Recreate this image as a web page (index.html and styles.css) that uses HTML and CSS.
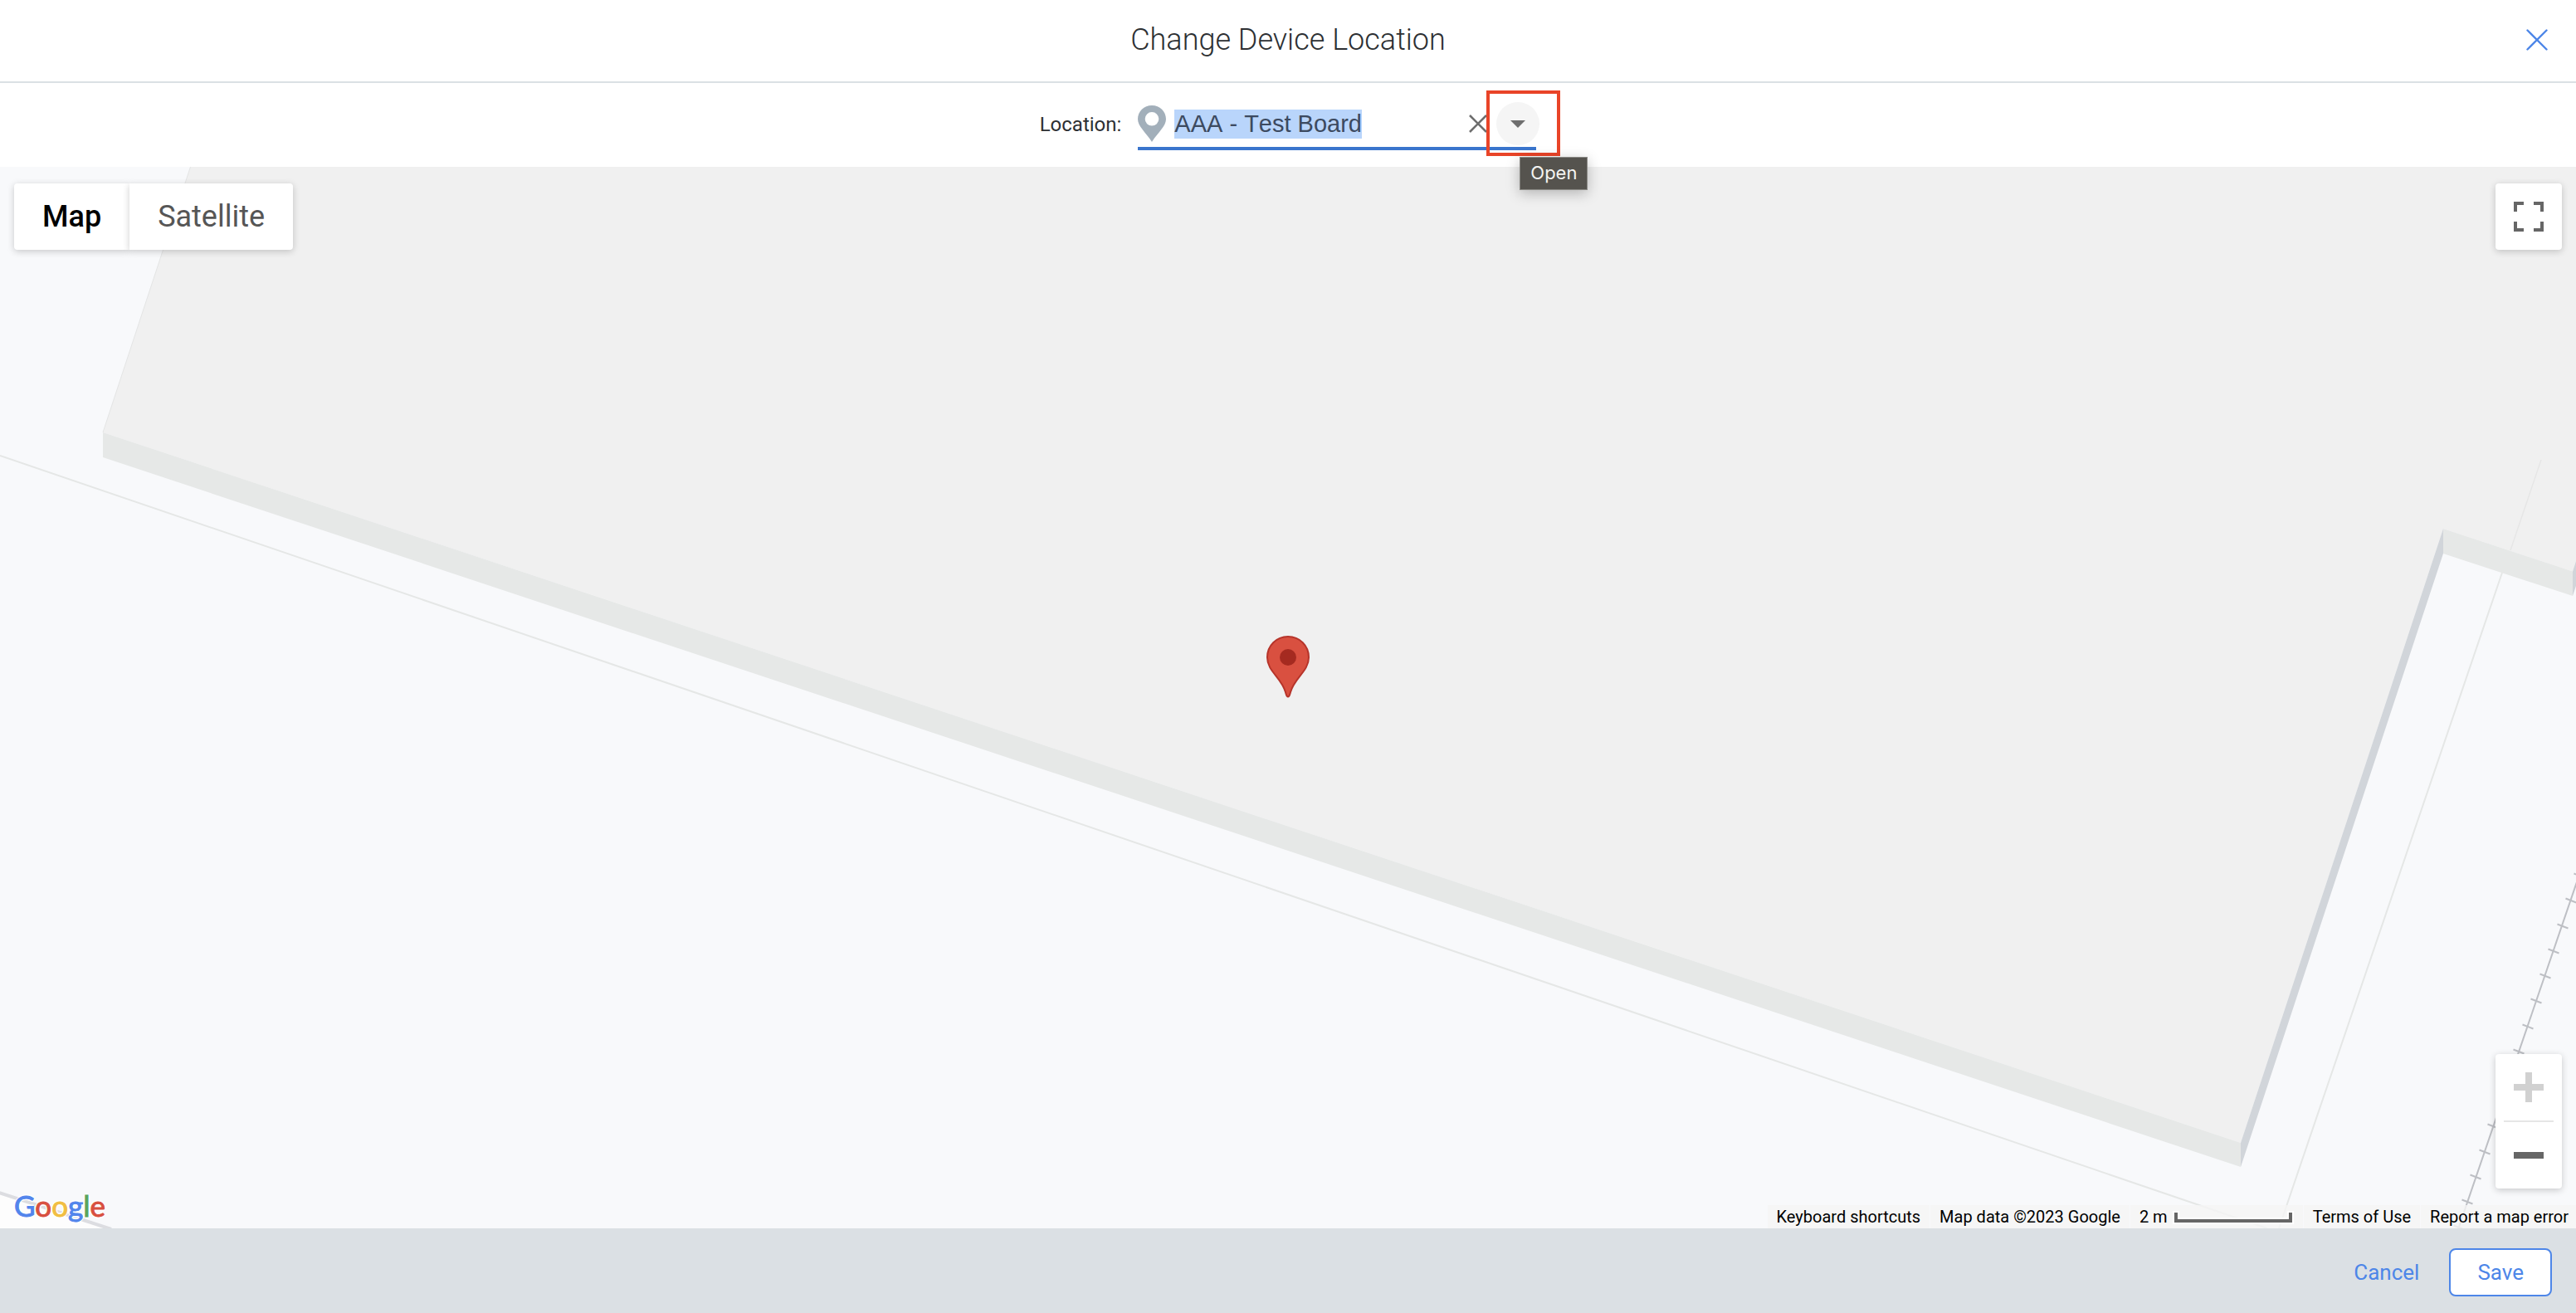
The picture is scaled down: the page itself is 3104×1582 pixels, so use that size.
FILE: index.html
```html
<!DOCTYPE html>
<html lang="en">
<head>
  <meta charset="UTF-8">
  <meta name="viewport" content="width=device-width, initial-scale=1.0">
  <title>Change Device Location</title>
  <link rel="stylesheet" href="styles.css">
</head>
<body>
  <!-- Dialog header -->
  <header class="header">
    <h1>Change Device Location</h1>
    <button class="close-button" aria-label="Close">
      <svg width="26" height="26" viewBox="0 0 26 26"><path d="M1.5 1.5l23 23M24.5 1.5l-23 23" stroke="#4d86e8" stroke-width="2.4" stroke-linecap="round"/></svg>
    </button>
  </header>

  <!-- Location picker -->
  <div class="location-row">
    <label for="location">Location:</label>
    <div class="field">
      <svg class="field-pin" width="34" height="44" viewBox="0 0 34 44"><path fill="#a2afba" fill-rule="evenodd" d="M17 0C7.5 0 0 7.3 0 16.6 0 25 9 32 17 44 25 32 34 25 34 16.6 34 7.3 26.5 0 17 0zm0 8a8.300 8.300 0 1 1 0 16.600 8.300 8.300 0 0 1 0-16.600z"/></svg>
      <input type="text" id="location" value="AAA - Test Board" autocomplete="off" spellcheck="false">
      <button class="clear-button" aria-label="Clear">
        <svg width="22" height="22" viewBox="0 0 22 22"><path d="M1 1l20 20M21 1L1 21" stroke="#6e6e6e" stroke-width="2.6"/></svg>
      </button>
      <button class="open-button" aria-label="Open">
        <svg width="18" height="9" viewBox="0 0 18 9"><path d="M0 0h18L9 9z" fill="#6e6e6e"/></svg>
      </button>
      <div class="highlight"></div>
      <div class="tooltip">Open</div>
    </div>
  </div>

  <!-- Map -->
  <main class="map">
    <svg class="map-canvas" viewBox="0 201 3104 1279" preserveAspectRatio="xMidYMid slice">
      <defs>
        <!-- One sleeper of the railway line -->
        <path id="tie" d="M-6.500 -2.500L6.500 2.500"/>
      </defs>
      <rect y="201" width="3104" height="1279" fill="#f8f9fb"/>
      <path d="M0 1437L132 1480H0z" fill="#fdfdfd"/>
      <path d="M-4 1436L134 1481" stroke="#dcdde1" stroke-width="4"/>
      <!-- Paths -->
      <g fill="none" stroke="#e5e7e6" stroke-width="2">
        <path d="M0 549L2732 1480"/>
        <path d="M3015 690L2797 1330L2746 1480"/>
      </g>
      <!-- Building -->
      <path d="M229.500 201L124 521L2700 1377L2944 637L3100 688.500L3104 676V201z" fill="#f0f0f0"/>
      <path d="M229.500 201L124 521" stroke="#e4e5e5" stroke-width="1"/>
      <path d="M124 521V551L2700 1406V1377zM2944 637V667L3100 718V688.500z" fill="#e6e8e7"/>
      <path d="M2700 1377V1406L2944 667V637zM3100 688.500V718L3104 706V676z" fill="#d1d5da"/>
      <path d="M3062 554L3025 663" stroke="#e6e6e6" stroke-width="1.500"/>
      <!-- Railway -->
      <g fill="none" stroke="#bdbfc4" stroke-width="2">
        <path d="M3108 1054L2962 1481"/>
        <use href="#tie" x="3108" y="1055"/>
        <use href="#tie" x="3098" y="1085"/>
        <use href="#tie" x="3088" y="1116"/>
        <use href="#tie" x="3077" y="1146"/>
        <use href="#tie" x="3067" y="1176"/>
        <use href="#tie" x="3056" y="1206"/>
        <use href="#tie" x="3046" y="1237"/>
        <use href="#tie" x="3035" y="1267"/>
        <use href="#tie" x="3004" y="1357"/>
        <use href="#tie" x="2994" y="1388"/>
        <use href="#tie" x="2983" y="1418"/>
        <use href="#tie" x="2973" y="1448"/>
        <use href="#tie" x="2963" y="1479"/>
      </g>
      <!-- Device marker -->
      <g transform="translate(1526 766)">
        <path d="M26 1C12 1 1 12 1 26c0 17 17 24 22 42 .8 3 1.200 5.500 3 5.500s2.200-2.500 3-5.500c5-18 22-25 22-42C51 12 40 1 26 1z" fill="#d95040" stroke="#b6342a" stroke-width="2"/>
        <circle cx="26" cy="26" r="10" fill="#a52a20"/>
      </g>
    </svg>

    <div class="map-controls">
      <div class="map-top">
        <div class="map-types">
          <button class="map-type active">Map</button>
          <button class="map-type">Satellite</button>
        </div>
        <button class="map-button" aria-label="Toggle fullscreen view">
          <svg width="36" height="36" viewBox="0 0 36 36"><path d="M2 12V2h10M24 2h10v10M34 24v10H24M12 34H2V24" fill="none" stroke="#666" stroke-width="4"/></svg>
        </button>
      </div>

      <div class="zoom">
        <button aria-label="Zoom in" disabled>
          <svg width="36" height="36" viewBox="0 0 36 36"><path d="M14 0h8v14h14v8H22v14h-8V22H0v-8h14z" fill="#d1d1d1"/></svg>
        </button>
        <div class="zoom-divider"></div>
        <button aria-label="Zoom out">
          <svg width="36" height="36" viewBox="0 0 36 36"><path d="M0 14h36v8H0z" fill="#666"/></svg>
        </button>
      </div>

      <div class="map-bottom">
        <a href="#" class="google"><span class="blue">G</span><span class="red">o</span><span class="yellow">o</span><span class="blue">g</span><span class="green">l</span><span class="red">e</span></a>
        <div class="credits">
          <button>Keyboard shortcuts</button>
          <span>Map data ©2023 Google</span>
          <button class="scale">2 m
            <svg width="146" height="16" viewBox="0 0 146 16"><path d="M0 0h8v8h130V0h8v16H0z" fill="#fff"/><path d="M4 2v10h138V2" fill="none" stroke="#666" stroke-width="4"/></svg>
          </button>
          <a href="#">Terms of Use</a>
          <a href="#">Report a map error</a>
        </div>
      </div>
    </div>
  </main>

  <!-- Dialog actions -->
  <footer class="footer">
    <button class="cancel-button">Cancel</button>
    <button class="save-button">Save</button>
  </footer>

  <script>
    // Start with the current location selected so it can be typed over
    const locationInput = document.getElementById('location');
    locationInput.focus();
    locationInput.select();
  </script>
</body>
</html>
```
FILE: styles.css
```css
* {
  box-sizing: border-box;
}
body {
  display: flex;
  flex-direction: column;
  min-height: 100vh;
  margin: 0;
  font-family: Roboto, Arial, sans-serif;
  background-color: #fff;
  color: #2d3033;
}
button {
  padding: 0;
  border: none;
  background: transparent;
  font-family: inherit;
  cursor: pointer;
}
a {
  color: inherit;
  text-decoration: none;
}
svg {
  display: block;
}

/* Header */
.header {
  position: relative;
  display: flex;
  justify-content: center;
  align-items: center;
  height: 100px;
  padding-bottom: 2px;
  border-bottom: 2px solid #dbe0e4;
}
.header h1 {
  margin: 0;
  font-size: 36px;
  font-weight: 300;
}
.close-button {
  position: absolute;
  right: 34px;
}

/* Location picker */
.location-row {
  display: flex;
  justify-content: center;
  align-items: center;
  gap: 20px;
  padding: 19px 0 20px;
}
.location-row label {
  font-size: 24px;
}
.field {
  position: relative;
  display: flex;
  align-items: center;
  width: 480px;
  height: 62px;
  padding-top: 2px;
  border-bottom: 4px solid #3a75cd;
}
.field-pin {
  flex: none;
}
.field input {
  flex: 1;
  min-width: 0;
  margin-left: 10px;
  padding: 0;
  border: none;
  outline: none;
  background: transparent;
  font-family: "Liberation Sans", Arial, sans-serif;
  font-size: 29px;
  font-kerning: none;
  line-height: 35px;
  color: #3c4a60;
}
.field input::selection {
  background-color: #b9d5fb;
  color: #3c4a60;
}
.clear-button {
  margin-right: 11px;
}
.open-button {
  display: flex;
  justify-content: center;
  align-items: center;
  width: 52px;
  height: 52px;
  margin-right: -4px;
  border-radius: 50%;
  background-color: #f5f5f5;
}
.highlight {
  position: absolute;
  top: -10px;
  right: -29px;
  width: 89px;
  height: 79px;
  border: 4px solid #e94428;
  pointer-events: none;
}
.tooltip {
  position: absolute;
  z-index: 2;
  top: 70px;
  left: 460px;
  padding: 0 12px 2px;
  border: 1px solid #8a8985;
  background-color: #55534e;
  box-shadow: 0 4px 16px rgba(0, 0, 0, 0.25);
  font-family: Inter, sans-serif;
  font-size: 22px;
  line-height: 36px;
  color: #f4f4f2;
}

/* Map */
.map {
  position: relative;
  display: flex;
  flex: 1;
  overflow: hidden;
}
.map-canvas {
  position: absolute;
  width: 100%;
  height: 100%;
}
.map-controls {
  position: relative;
  display: flex;
  flex: 1;
  flex-direction: column;
}
.map-top {
  display: flex;
  justify-content: space-between;
  padding: 20px 17px;
  margin-bottom: auto;
}
.map-types {
  display: flex;
}
.map-type {
  height: 80px;
  padding: 0 34px;
  background-color: #fff;
  box-shadow: 0 2px 8px rgba(0, 0, 0, 0.2);
  border-radius: 0 4px 4px 0;
  font-size: 36px;
  color: #565656;
}
.map-type.active {
  border-radius: 4px 0 0 4px;
  font-weight: 500;
  color: #000;
}
.map-button {
  display: flex;
  justify-content: center;
  align-items: center;
  width: 80px;
  height: 80px;
  border-radius: 4px;
  background-color: #fff;
  box-shadow: 0 2px 8px rgba(0, 0, 0, 0.2);
}
.zoom {
  align-self: flex-end;
  width: 80px;
  margin-right: 17px;
  border-radius: 4px;
  background-color: #fff;
  box-shadow: 0 2px 8px rgba(0, 0, 0, 0.2);
}
.zoom button {
  display: flex;
  justify-content: center;
  align-items: center;
  width: 80px;
  height: 80px;
}
.zoom-divider {
  height: 2px;
  margin: 0 10px;
  background-color: #e6e6e6;
}
.map-bottom {
  display: flex;
  justify-content: space-between;
  align-items: flex-end;
  height: 48px;
}
.google {
  padding: 0 0 6px 17px;
  font-family: Lato, sans-serif;
  font-size: 35px;
  line-height: 44px;
  text-shadow: 2px 0 #fff, -2px 0 #fff, 0 2px #fff, 0 -2px #fff;
  -webkit-text-stroke: 1px;
}
.blue {
  color: #5285ec;
}
.red {
  color: #d85040;
}
.yellow {
  color: #f1be42;
}
.green {
  color: #58a55c;
}
.credits {
  display: flex;
  gap: 1px;
}
.credits > * {
  padding: 1px 11px 0;
  background-color: rgba(245, 245, 245, 0.8);
  font-size: 20px;
  line-height: 27px;
  color: #000;
}
.credits > :last-child {
  padding-right: 9px;
}
.credits .scale {
  display: flex;
  align-items: center;
  gap: 6px;
}

/* Footer */
.footer {
  display: flex;
  justify-content: flex-end;
  align-items: center;
  gap: 36px;
  height: 102px;
  padding: 4px 29px 0;
  background-color: #dbe0e4;
}
.footer button {
  font-size: 26px;
  color: #4d86e8;
}
.footer .save-button {
  height: 58px;
  padding: 0 32px;
  border: 2px solid #4d86e8;
  border-radius: 8px;
  background-color: #fff;
}
```
